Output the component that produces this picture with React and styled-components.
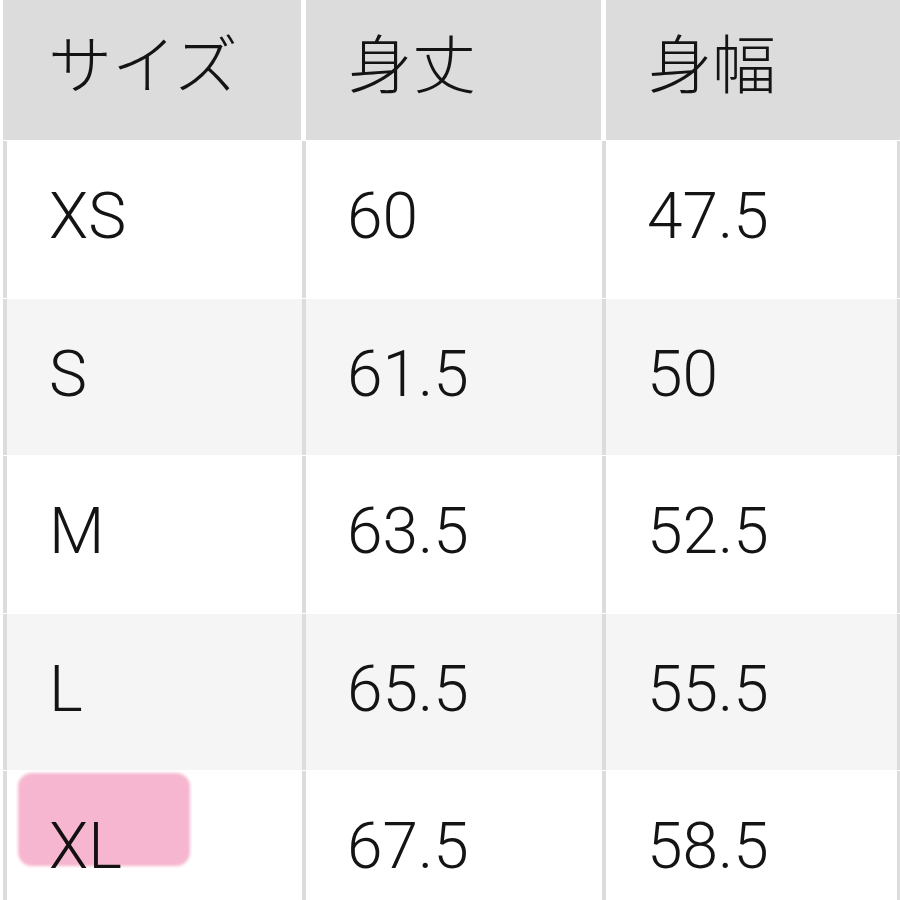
import React from 'react'
import styled, { createGlobalStyle } from 'styled-components'

const GlobalStyle = createGlobalStyle`
  html, body {
    margin: 0;
    padding: 0;
    background: #fff;
  }
  body {
    font-family: Roboto, "Liberation Sans", "Noto Sans CJK JP", sans-serif;
    color: #141414;
  }
`

const rows = [
  { size: 'XS', length: '60', width: '47.5' },
  { size: 'S', length: '61.5', width: '50' },
  { size: 'M', length: '63.5', width: '52.5' },
  { size: 'L', length: '65.5', width: '55.5' },
  { size: 'XL', length: '67.5', width: '58.5', marked: true },
]

function App() {
  return (
    <>
      <GlobalStyle />
      <Table>
        <HeaderRow>
          <HeadCell>サイズ</HeadCell>
          <HeadCell>身丈</HeadCell>
          <HeadCell>身幅</HeadCell>
        </HeaderRow>
        {rows.map((r, i) => (
          <BodyRow key={r.size}>
            <Cell $striped={i % 2 === 1}>
              {r.marked && <Marker />}
              {r.size}
            </Cell>
            <Cell $striped={i % 2 === 1}>{r.length}</Cell>
            <Cell $striped={i % 2 === 1}>{r.width}</Cell>
          </BodyRow>
        ))}
      </Table>
    </>
  )
}

const Table = styled.div`
  width: 900px;
  height: 900px;
  overflow: hidden;
  display: flex;
  flex-direction: column;
  gap: 1px;
`

const HeaderRow = styled.div`
  display: grid;
  grid-template-columns: 298px 295px 1fr;
  column-gap: 5px;
  margin-left: 3px;
  height: 140px;
  flex-shrink: 0;
`

const HeadCell = styled.div`
  background: #dcdcdc;
  display: flex;
  align-items: center;
  padding-left: 42px;
  padding-bottom: 20px;
  font-family: "Noto Sans CJK JP", sans-serif;
  font-weight: 300;
  font-size: 64px;
  line-height: 1;
  &:first-child {
    padding-left: 45px;
  }
`

const BodyRow = styled.div`
  display: grid;
  grid-template-columns: 295px 296px 1fr;
  column-gap: 4px;
  margin-left: 3px;
  padding: 0 3px 0 4px;
  background: #dcdcdc;
  height: 156.5px;
  flex-shrink: 0;
`

const Cell = styled.div`
  position: relative;
  background: ${p => (p.$striped ? '#f5f5f5' : '#ffffff')};
  display: flex;
  align-items: center;
  padding-left: 41px;
  padding-bottom: 4px;
  font-weight: 300;
  font-size: 64px;
  line-height: 1;
  &:first-child {
    padding-left: 42px;
  }
`

const Marker = styled.span`
  position: absolute;
  left: 11px;
  top: 2px;
  width: 172px;
  height: 93px;
  border-radius: 14px;
  background: #f6b6cf;
  mix-blend-mode: multiply;
  filter: blur(1.5px);
  pointer-events: none;
`

export default App
